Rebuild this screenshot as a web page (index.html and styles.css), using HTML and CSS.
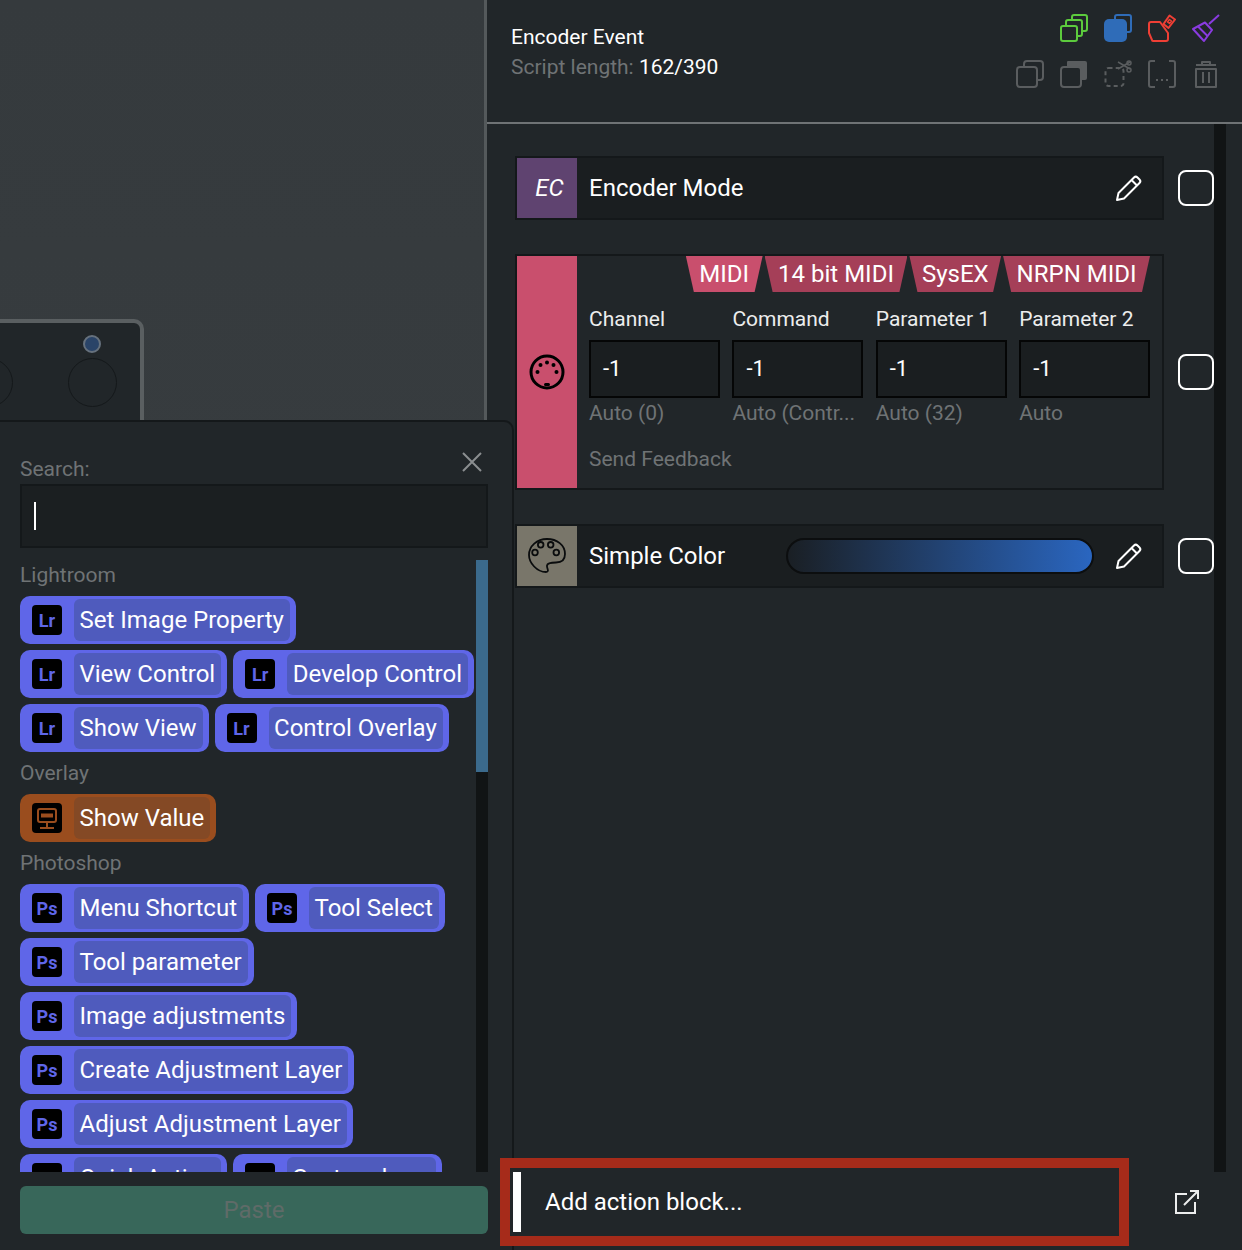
FILE: index.html
```html
<!DOCTYPE html>
<html lang="en">
<head>
  <meta charset="UTF-8">
  <title>Encoder Event</title>
  <link rel="stylesheet" href="styles.css">
</head>
<body>
  <div class="app">
    <!-- Device canvas -->
    <div class="canvas">
      <div class="device">
        <div class="knob knob-cut"></div>
        <div class="led"></div>
        <div class="knob knob-main"></div>
      </div>
    </div>

    <!-- Action picker, lies over the canvas -->
    <div class="picker">
      <div class="search-head">
        <span>Search:</span>
        <svg class="close" viewBox="0 0 20 20"><path d="M1 1 L19 19 M19 1 L1 19"/></svg>
      </div>
      <div class="search-box"><span class="caret"></span></div>

      <div class="picker-list">
        <div class="picker-items">
          <div class="group-title">Lightroom</div>
          <div class="pills">
            <div class="pill"><span class="app-icon">Lr</span><span class="pill-text">Set Image Property</span></div>
            <div class="pill"><span class="app-icon">Lr</span><span class="pill-text">View Control</span></div>
            <div class="pill"><span class="app-icon">Lr</span><span class="pill-text">Develop Control</span></div>
            <div class="pill"><span class="app-icon">Lr</span><span class="pill-text">Show View</span></div>
            <div class="pill"><span class="app-icon">Lr</span><span class="pill-text">Control Overlay</span></div>
          </div>
          <div class="group-title">Overlay</div>
          <div class="pills">
            <div class="pill pill-orange">
              <span class="app-icon">
                <svg viewBox="0 0 30 30" class="monitor"><rect x="6" y="6" width="18" height="13" rx="2"/><path d="M9 12.5 H21" class="monitor-bar"/><path d="M15 19 V25 M8 25 H22"/></svg>
              </span>
              <span class="pill-text">Show Value</span>
            </div>
          </div>
          <div class="group-title">Photoshop</div>
          <div class="pills">
            <div class="pill"><span class="app-icon">Ps</span><span class="pill-text">Menu Shortcut</span></div>
            <div class="pill"><span class="app-icon">Ps</span><span class="pill-text">Tool Select</span></div>
            <div class="pill"><span class="app-icon">Ps</span><span class="pill-text">Tool parameter</span></div>
            <div class="pill"><span class="app-icon">Ps</span><span class="pill-text">Image adjustments</span></div>
            <div class="pill"><span class="app-icon">Ps</span><span class="pill-text">Create Adjustment Layer</span></div>
            <div class="pill"><span class="app-icon">Ps</span><span class="pill-text">Adjust Adjustment Layer</span></div>
            <div class="pill"><span class="app-icon">Ps</span><span class="pill-text">Quick Action</span></div>
            <div class="pill"><span class="app-icon">Ps</span><span class="pill-text">Custom keys</span></div>
          </div>
        </div>
        <div class="picker-scroll"><div class="picker-thumb"></div></div>
      </div>

      <button class="paste">Paste</button>
    </div>

    <!-- Event editor -->
    <div class="editor">
      <header class="editor-head">
        <div class="event-info">
          <div class="event-name">Encoder Event</div>
          <div class="event-length">Script length: <b>162/390</b></div>
        </div>
        <div class="tools">
          <span></span>
          <svg viewBox="0 0 28 28" class="tool green">
            <path d="M12 5 V3 a2 2 0 0 1 2 -2 H25 a2 2 0 0 1 2 2 V15 a2 2 0 0 1 -2 2 H22"/>
            <path d="M6 11 V8 a2 2 0 0 1 2 -2 H20 a2 2 0 0 1 2 2 V20 a2 2 0 0 1 -2 2 H17"/>
            <rect x="1" y="12" width="16" height="15" rx="2"/>
          </svg>
          <svg viewBox="0 0 28 28" class="tool blue">
            <path d="M11 5 V3 a2 2 0 0 1 2 -2 H25 a2 2 0 0 1 2 2 V16 a2 2 0 0 1 -2 2 H23"/>
            <rect x="0" y="5" width="23" height="23" rx="5" class="solid"/>
          </svg>
          <svg viewBox="0 0 28 28" class="tool red">
            <path d="M3 8 H12 L20 19 V25 a2 2 0 0 1 -2 2 H5 a1 1 0 0 1 -1 -1 L1 19 V10 a2 2 0 0 1 2 -2 Z"/>
            <path d="M15.5 10 L21.5 1.5 L27 5.5 L20.5 14 Z"/>
            <path d="M19.5 8 L21.5 5.5 L23.5 7 L21.5 9.5 Z" class="thin"/>
          </svg>
          <svg viewBox="0 0 28 28" class="tool purple">
            <path d="M27 1 L17 10"/>
            <path d="M1 15 L13 8.5 L20 16 L12 27 Z"/>
            <path d="M6 12.5 L15.5 22"/>
          </svg>
          <svg viewBox="0 0 28 28" class="tool grey">
            <rect x="1" y="7" width="20" height="20" rx="3"/>
            <path d="M8 7 V4 a3 3 0 0 1 3 -3 H24 a3 3 0 0 1 3 3 V17 a3 3 0 0 1 -3 3 H21"/>
          </svg>
          <svg viewBox="0 0 28 28" class="tool grey">
            <path d="M7 2 a1 1 0 0 1 1 -1 H25 a2 2 0 0 1 2 2 V18 a2 2 0 0 1 -2 2 H7 Z" class="solid"/>
            <rect x="1" y="7" width="20" height="20" rx="3" class="backed"/>
          </svg>
          <svg viewBox="0 0 28 28" class="tool grey">
            <rect x="1.5" y="8" width="18" height="18" rx="3" stroke-dasharray="4 3.2"/>
            <path d="M14 2 L26 9 M14 9 L26 2" class="thin"/>
            <circle cx="25" cy="3" r="2" class="thin"/>
            <circle cx="25" cy="10" r="2" class="thin"/>
          </svg>
          <svg viewBox="0 0 28 28" class="tool grey">
            <path d="M7 1 H3 a2 2 0 0 0 -2 2 V25 a2 2 0 0 0 2 2 H7"/>
            <path d="M21 1 H25 a2 2 0 0 1 2 2 V25 a2 2 0 0 1 -2 2 H21"/>
            <path d="M8 20 h2 M13 20 h2 M18 20 h2"/>
          </svg>
          <svg viewBox="0 0 28 28" class="tool grey">
            <path d="M4 5 H24 M10 5 V2 H18 V5"/>
            <path d="M4 9 H24 V27 H4 Z"/>
            <path d="M11 12 V23 M17 12 V23"/>
          </svg>
        </div>
      </header>

      <div class="editor-body">
        <div class="blocks">
          <div class="block-row">
            <div class="block">
              <div class="block-icon icon-purple">EC</div>
              <div class="block-title">Encoder Mode</div>
              <svg viewBox="0 0 28 28" class="pencil"><path d="M2 26 L3.5 19 L19 3.5 a2.5 2.5 0 0 1 3.5 0 L24.5 5.5 a2.5 2.5 0 0 1 0 3.5 L9 24.5 Z M16.5 6 L22 11.5"/></svg>
            </div>
            <span class="check"></span>
          </div>

          <div class="block-row">
            <div class="block block-tall">
              <div class="block-icon icon-pink">
                <svg viewBox="0 0 36 36" class="midi-icon">
                  <circle cx="18" cy="18" r="16" class="ring"/>
                  <circle cx="8.5" cy="18" r="2"/>
                  <circle cx="11.5" cy="11" r="2"/>
                  <circle cx="18" cy="8.5" r="2"/>
                  <circle cx="24.5" cy="11" r="2"/>
                  <circle cx="27.5" cy="18" r="2"/>
                  <rect x="15" y="29" width="6" height="3" rx="1.5"/>
                </svg>
              </div>
              <div class="midi-body">
                <div class="tabs">
                  <span class="tab tab-active">MIDI</span>
                  <span class="tab">14 bit MIDI</span>
                  <span class="tab tab-short">SysEX</span>
                  <span class="tab">NRPN MIDI</span>
                </div>
                <div class="params">
                  <div class="param"><label>Channel</label><div class="param-input">-1</div><div class="param-hint">Auto (0)</div></div>
                  <div class="param"><label>Command</label><div class="param-input">-1</div><div class="param-hint">Auto (Contr...</div></div>
                  <div class="param"><label>Parameter 1</label><div class="param-input">-1</div><div class="param-hint">Auto (32)</div></div>
                  <div class="param"><label>Parameter 2</label><div class="param-input">-1</div><div class="param-hint">Auto</div></div>
                </div>
                <div class="feedback">Send Feedback</div>
              </div>
            </div>
            <span class="check"></span>
          </div>

          <div class="block-row">
            <div class="block">
              <div class="block-icon icon-khaki">
                <svg viewBox="0 0 38 38" class="palette-icon">
                  <path d="M19 2 C9 2 1 9 1 18 C1 26 9 35 18 35 C22 35 18.5 31 19 28.5 C19.5 26 24 25.5 28 25.5 C33 25.5 37 23 37 17 C37 8 29 2 19 2 Z"/>
                  <circle cx="12.7" cy="7.8" r="2.8"/>
                  <circle cx="22.7" cy="7.8" r="2.8"/>
                  <circle cx="28.3" cy="15.5" r="2.8"/>
                  <circle cx="7" cy="15.5" r="2.8"/>
                </svg>
              </div>
              <div class="block-title color-title">Simple Color</div>
              <div class="color-bar"></div>
              <svg viewBox="0 0 28 28" class="pencil"><path d="M2 26 L3.5 19 L19 3.5 a2.5 2.5 0 0 1 3.5 0 L24.5 5.5 a2.5 2.5 0 0 1 0 3.5 L9 24.5 Z M16.5 6 L22 11.5"/></svg>
            </div>
            <span class="check"></span>
          </div>
        </div>
        <div class="editor-scroll"></div>
      </div>

      <footer class="editor-foot">
        <div class="add-action">
          <span class="add-mark"></span>
          <span class="add-text">Add action block...</span>
        </div>
        <svg viewBox="0 0 24 24" class="popout"><path d="M12 4 H1 V23 H20 V12"/><path d="M9 15 L23 1 M15 1 H23 V9"/></svg>
      </footer>
    </div>
  </div>
</body>
</html>
```

FILE: styles.css
```css
* {
  box-sizing: border-box;
}
body {
  margin: 0;
  background: #212629;
  color: #fff;
  font-family: Roboto, "Liberation Sans", sans-serif;
  overflow: hidden;
}
svg {
  display: block;
}
.app {
  position: relative;
  display: flex;
  width: 1242px;
  height: 1250px;
  overflow: hidden;
}

/* canvas */
.canvas {
  position: relative;
  width: 487px;
  height: 100%;
  background: linear-gradient(180deg, #353a3d 0%, #3a3f42 100%);
  border-right: 3px solid #54595b;
  flex-shrink: 0;
}
.device {
  position: absolute;
  left: -60px;
  top: 319px;
  width: 204px;
  height: 140px;
  background: #212629;
  border: 4px solid #5a5f61;
  border-radius: 10px;
}
.knob {
  position: absolute;
  width: 49px;
  height: 49px;
  border-radius: 50%;
  border: 1px solid #14181a;
}
.knob-cut {
  left: 20px;
  top: 35px;
}
.knob-main {
  left: 124px;
  top: 35px;
}
.led {
  position: absolute;
  left: 139px;
  top: 12px;
  width: 18px;
  height: 18px;
  border-radius: 50%;
  background: #2a4468;
  border: 2px solid #66717d;
}

/* picker */
.picker {
  position: absolute;
  left: 0;
  top: 420px;
  bottom: 0;
  z-index: 2;
  width: 514px;
  background: #212629;
  border-top: 2px solid #14181a;
  border-right: 2px solid #14181a;
  border-top-right-radius: 10px;
  padding: 0 24px 16px 20px;
  display: flex;
  flex-direction: column;
}
.search-head {
  display: flex;
  justify-content: space-between;
  align-items: flex-end;
  height: 62px;
  color: #6f7375;
  font-size: 21px;
  line-height: 30px;
}
.close {
  width: 20px;
  height: 20px;
  margin: 0 6px 12px 0;
  fill: none;
  stroke: #8b8e90;
  stroke-width: 2;
}
.search-box {
  height: 64px;
  background: #1b1f21;
  border: 2px solid #14181a;
  padding: 16px 12px;
}
.caret {
  display: block;
  width: 2px;
  height: 28px;
  background: #fff;
}
.picker-list {
  flex: 1;
  display: flex;
  min-height: 0;
  margin-top: 12px;
  overflow: hidden;
}
.picker-items {
  width: 456px;
  overflow: hidden;
}
.picker-scroll {
  width: 12px;
  background: #111415;
}
.picker-thumb {
  height: 212px;
  background: #3b6a8c;
}
.group-title {
  height: 36px;
  color: #6f7375;
  font-size: 21px;
  line-height: 30px;
}
.pills + .group-title {
  margin-top: 6px;
}
.pills {
  display: flex;
  flex-wrap: wrap;
  gap: 6px;
}
.pill {
  display: flex;
  align-items: center;
  height: 48px;
  padding: 3px 6px 3px 12px;
  background: #5f66e8;
  border-radius: 10px;
  gap: 12px;
}
.pill-orange {
  background: #9a4d1e;
}
.app-icon {
  width: 30px;
  height: 30px;
  display: flex;
  align-items: center;
  justify-content: center;
  background: #000;
  border-radius: 4px;
  color: #5f66e8;
  font-size: 18px;
  font-weight: 700;
}
.pill-text {
  display: block;
  height: 42px;
  padding: 0 6px 0 5.5px;
  background: #4f5bbd;
  border-radius: 6px;
  font-size: 24px;
  line-height: 42px;
  white-space: nowrap;
}
.pill-orange .pill-text {
  background: #844925;
}
.monitor {
  width: 30px;
  height: 30px;
  fill: none;
  stroke: #9a4d1e;
  stroke-width: 2;
}
.monitor-bar {
  stroke-width: 4;
}
.paste {
  height: 48px;
  margin-top: 14px;
  width: 468px;
  border: none;
  border-radius: 6px;
  background: #38675a;
  color: #5f6b68;
  font-family: inherit;
  font-size: 24px;
}

/* editor */
.editor {
  flex: 1;
  display: flex;
  flex-direction: column;
  min-width: 0;
}
.editor-head {
  display: flex;
  justify-content: space-between;
  height: 124px;
  padding: 14px 22px 0 24px;
  border-bottom: 2px solid #6f7375;
}
.event-info {
  font-size: 21px;
  line-height: 30px;
  padding-top: 8px;
}
.event-length {
  color: #6f7375;
}
.event-length b {
  color: #fff;
  font-weight: 400;
}
.tools {
  display: grid;
  grid-template-columns: repeat(5, 28px);
  grid-template-rows: 28px 28px;
  gap: 18px 16px;
}
.tool {
  width: 28px;
  height: 28px;
  fill: none;
  stroke-width: 2;
  stroke-linejoin: round;
}
.green { stroke: #5ccb3d; }
.blue { stroke: #2f6cb8; }
.red { stroke: #ef3f35; }
.purple { stroke: #8a3be0; }
.grey { stroke: #5a5d5f; }
.blue .solid {
  fill: #2f6cb8;
  stroke: none;
}
.grey .solid {
  fill: #5a5d5f;
  stroke: none;
}
.grey .backed {
  fill: #212629;
}
.thin {
  stroke-width: 1.5;
}
.editor-body {
  flex: 1;
  display: flex;
  min-height: 0;
}
.blocks {
  width: 727px;
  padding: 32px 0 0 28px;
  display: flex;
  flex-direction: column;
  gap: 34px;
}
.editor-scroll {
  width: 12px;
  background: #111415;
}
.block-row {
  display: flex;
  align-items: center;
  gap: 14px;
}
.check {
  width: 36px;
  height: 36px;
  border: 2px solid #fff;
  border-radius: 8px;
  flex-shrink: 0;
}
.block {
  display: flex;
  align-items: center;
  width: 649px;
  height: 64px;
  background: #1a1e20;
  border: 2px solid #14181a;
}
.block-tall {
  height: 236px;
  align-items: stretch;
  background: #212629;
}
.block-icon {
  width: 60px;
  align-self: stretch;
  display: flex;
  align-items: center;
  justify-content: center;
  flex-shrink: 0;
}
.icon-purple {
  background: #5f4370;
  padding-left: 5px;
  font-size: 24px;
  font-style: italic;
}
.icon-pink {
  background: #c94f6d;
}
.icon-khaki {
  background: #79766a;
}
.block-title {
  flex: 1;
  padding-left: 12px;
  font-size: 24px;
}
.color-title {
  flex: none;
  width: 209px;
}
.color-bar {
  width: 308px;
  height: 36px;
  flex-shrink: 0;
  border: 2px solid #0c0e0f;
  border-radius: 18px;
  background: linear-gradient(90deg, #1a1f24 0%, #2a66c0 100%);
}
.pencil {
  width: 28px;
  height: 28px;
  margin: 0 19px 0 21px;
  flex-shrink: 0;
  fill: none;
  stroke: #fff;
  stroke-width: 2;
  stroke-linejoin: round;
}
.midi-icon {
  width: 36px;
  height: 36px;
  fill: #000;
}
.midi-icon .ring {
  fill: none;
  stroke: #000;
  stroke-width: 3;
}
.palette-icon {
  width: 38px;
  height: 38px;
  fill: none;
  stroke: #0a0c0d;
  stroke-width: 1.8;
}
.midi-body {
  flex: 1;
  min-width: 0;
  padding: 0 12px;
}
.tabs {
  display: flex;
  justify-content: flex-end;
  gap: 2px;
  height: 36px;
}
.tab {
  height: 36px;
  padding: 0 13.5px;
  background: #a53f58;
  clip-path: polygon(0 0, 100% 0, calc(100% - 8px) 100%, 8px 100%);
  font-size: 24px;
  line-height: 36px;
  white-space: nowrap;
}
.tab-short {
  padding: 0 12.5px;
}
.tab-active {
  background: #c94f6d;
}
.params {
  display: grid;
  grid-template-columns: repeat(4, 1fr);
  gap: 12.5px;
  margin-top: 12px;
}
.param {
  min-width: 0;
}
.param label {
  display: block;
  height: 36px;
  font-size: 21px;
  line-height: 30px;
  color: #eceded;
}
.param-input {
  height: 58px;
  padding-left: 12px;
  background: #1a1e20;
  border: 2px solid #050606;
  font-size: 22px;
  line-height: 54px;
}
.param-hint {
  height: 30px;
  color: #6f7375;
  font-size: 21px;
  line-height: 30px;
  white-space: nowrap;
}
.feedback {
  margin-top: 16px;
  color: #6f7375;
  font-size: 21px;
  line-height: 30px;
}
.editor-foot {
  position: relative;
  z-index: 3;
  display: flex;
  height: 78px;
  padding-left: 13px;
}
.add-action {
  display: flex;
  align-items: center;
  width: 629px;
  height: 88px;
  margin-top: -14px;
  background: #212629;
  border: 10px solid #a62b1a;
  padding: 4px 0 4px 3px;
}
.add-mark {
  width: 8px;
  height: 60px;
  background: #fff;
}
.add-text {
  margin-left: 24px;
  font-size: 24px;
}
.popout {
  width: 24px;
  height: 24px;
  margin: 18px 0 0 46px;
  fill: none;
  stroke: #eceded;
  stroke-width: 2;
}
```
